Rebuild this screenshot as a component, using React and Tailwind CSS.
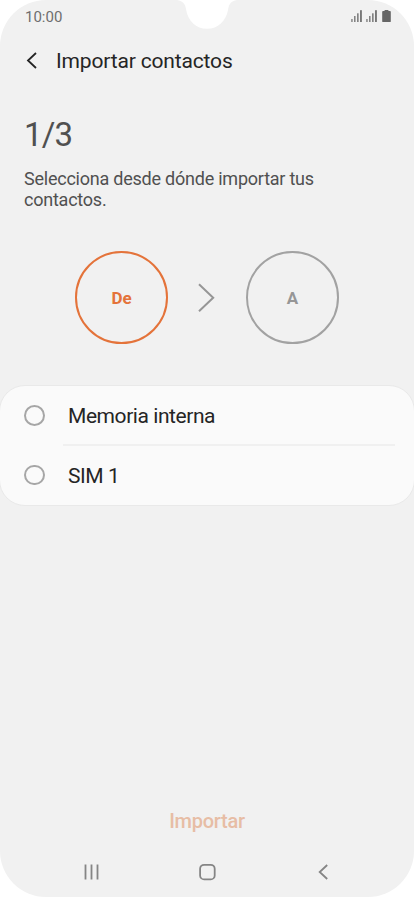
import clsx from "clsx";

const options = ["Memoria interna", "SIM 1"];

function Signal() {
  return (
    <svg width="12" height="13" viewBox="0 0 12 13" fill="#777777">
      <rect x="0.3" y="9" width="1.3" height="3" />
      <rect x="3.1" y="6" width="1.4" height="6" />
      <rect x="6.1" y="3.3" width="1.5" height="8.7" />
      <rect x="9" y="0.2" width="1.9" height="11.8" />
    </svg>
  );
}

function StatusBar() {
  return (
    <div className="flex h-8 items-start justify-between pl-[25px] pr-[23px]">
      <span className="pt-[7px] text-[15px] leading-5 text-[#6e6e6e]">10:00</span>

      {/* signal + battery */}
      <div className="flex gap-[3px] pt-[10px]">
        <Signal />
        <Signal />
        <svg className="ml-px" width="9" height="13" viewBox="0 0 9 13">
          <path d="M2.6 0h3.8v1.1H8q.8 0 .8.8v9.3q0 .9-.8.9H1q-.8 0-.8-.9V1.9q0-.8.8-.8h1.6z" fill="#666666" />
        </svg>
      </div>
    </div>
  );
}

function Notch() {
  return (
    <svg className="absolute left-[177px] top-0" width="60" height="30" viewBox="0 0 60 30">
      <path d="M0 0C6 1 8.5 4 9.2 10C11 21 19 28.8 30 28.8S49 21 51 10C51.8 4 54 1 60 0z" fill="#ffffff" />
    </svg>
  );
}

function Step({ label, active }) {
  return (
    <div
      className={clsx(
        "flex size-[93px] items-center justify-center rounded-full border-2 pt-0.5 text-[17px] font-bold",
        active ? "border-[#e4733a] text-[#e4733a]" : "border-[#a2a2a2] text-[#969696]"
      )}
    >
      {label}
    </div>
  );
}

export default function App() {
  return (
    <div className="h-[897px] w-[414px] bg-white font-[Roboto,sans-serif]">
      <div className="relative flex h-full flex-col overflow-hidden rounded-[46px] bg-[#f1f1f1]">
        <StatusBar />
        <Notch />

        <header className="flex h-[58px] items-center pl-[26px]">
          <svg width="12" height="18" viewBox="0 0 12 18" fill="none" stroke="#252525" strokeWidth="1.8">
            <path d="M10 1L2 8.500l8 7.500" />
          </svg>
          <h1 className="ml-[18px] pt-0.5 text-[21px] tracking-[-0.16px] text-[#252525]">Importar contactos</h1>
        </header>

        <section className="px-6 pt-[25px]">
          <p className="text-[33px] leading-10 tracking-[-0.8px] text-[#505050]">1/3</p>
          <p className="mt-[13px] w-[320px] text-[18px] leading-[21px] tracking-[-0.23px] text-[#505050]">
            Selecciona desde dónde importar tus contactos.
          </p>
        </section>

        <div className="mt-[41px] flex items-center justify-center">
          <Step label="De" active />
          <svg className="mx-[29px]" width="20" height="30" viewBox="0 0 20 30" fill="none" stroke="#969696" strokeWidth="2">
            <path d="M2 1.200L16.200 14.700L2 28.200" />
          </svg>
          <Step label="A" />
        </div>

        <div className="-mx-px mt-[41px] rounded-[26px] border border-[#e9e9e9] bg-[#fafafa]">
          {options.map((name, i) => (
            <label key={name} className="flex h-[59.5px] items-center pl-6 pr-[19px]">
              <span className="-mt-px size-[20.5px] rounded-full border-2 border-[#a6a6a6]" />
              <span
                className={clsx(
                  "ml-[18.5px] flex h-full flex-1 items-center pl-[5px] pt-[3px] text-[21px] tracking-[-0.43px] text-[#252525]",
                  i === 0 && "border-b-2 border-[#f0f0f0]"
                )}
              >
                {name}
              </span>
            </label>
          ))}
        </div>

        <button className="mx-auto mt-auto text-[20px] font-medium leading-6 tracking-[-0.25px] text-[#e7bda5]">
          Importar
        </button>

        {/* navigation keys */}
        <nav className="mb-[15px] mt-[29px] flex items-center justify-between pl-[83px] pr-[82px]">
          <svg width="18" height="20" viewBox="0 0 18 20" stroke="#858585" strokeWidth="1.8">
            <path d="M2.500 2.500v15M8.500 2.500v15M14.500 2.500v15" />
          </svg>
          <svg width="18" height="20" viewBox="0 0 18 20" fill="none" stroke="#858585" strokeWidth="1.8">
            <rect x="1.100" y="2.800" width="14.600" height="14.600" rx="4" />
          </svg>
          <svg width="18" height="20" viewBox="0 0 18 20" fill="none" stroke="#858585" strokeWidth="1.8">
            <path d="M13.200 3L5.700 10l7.500 7" />
          </svg>
        </nav>
      </div>
    </div>
  );
}
